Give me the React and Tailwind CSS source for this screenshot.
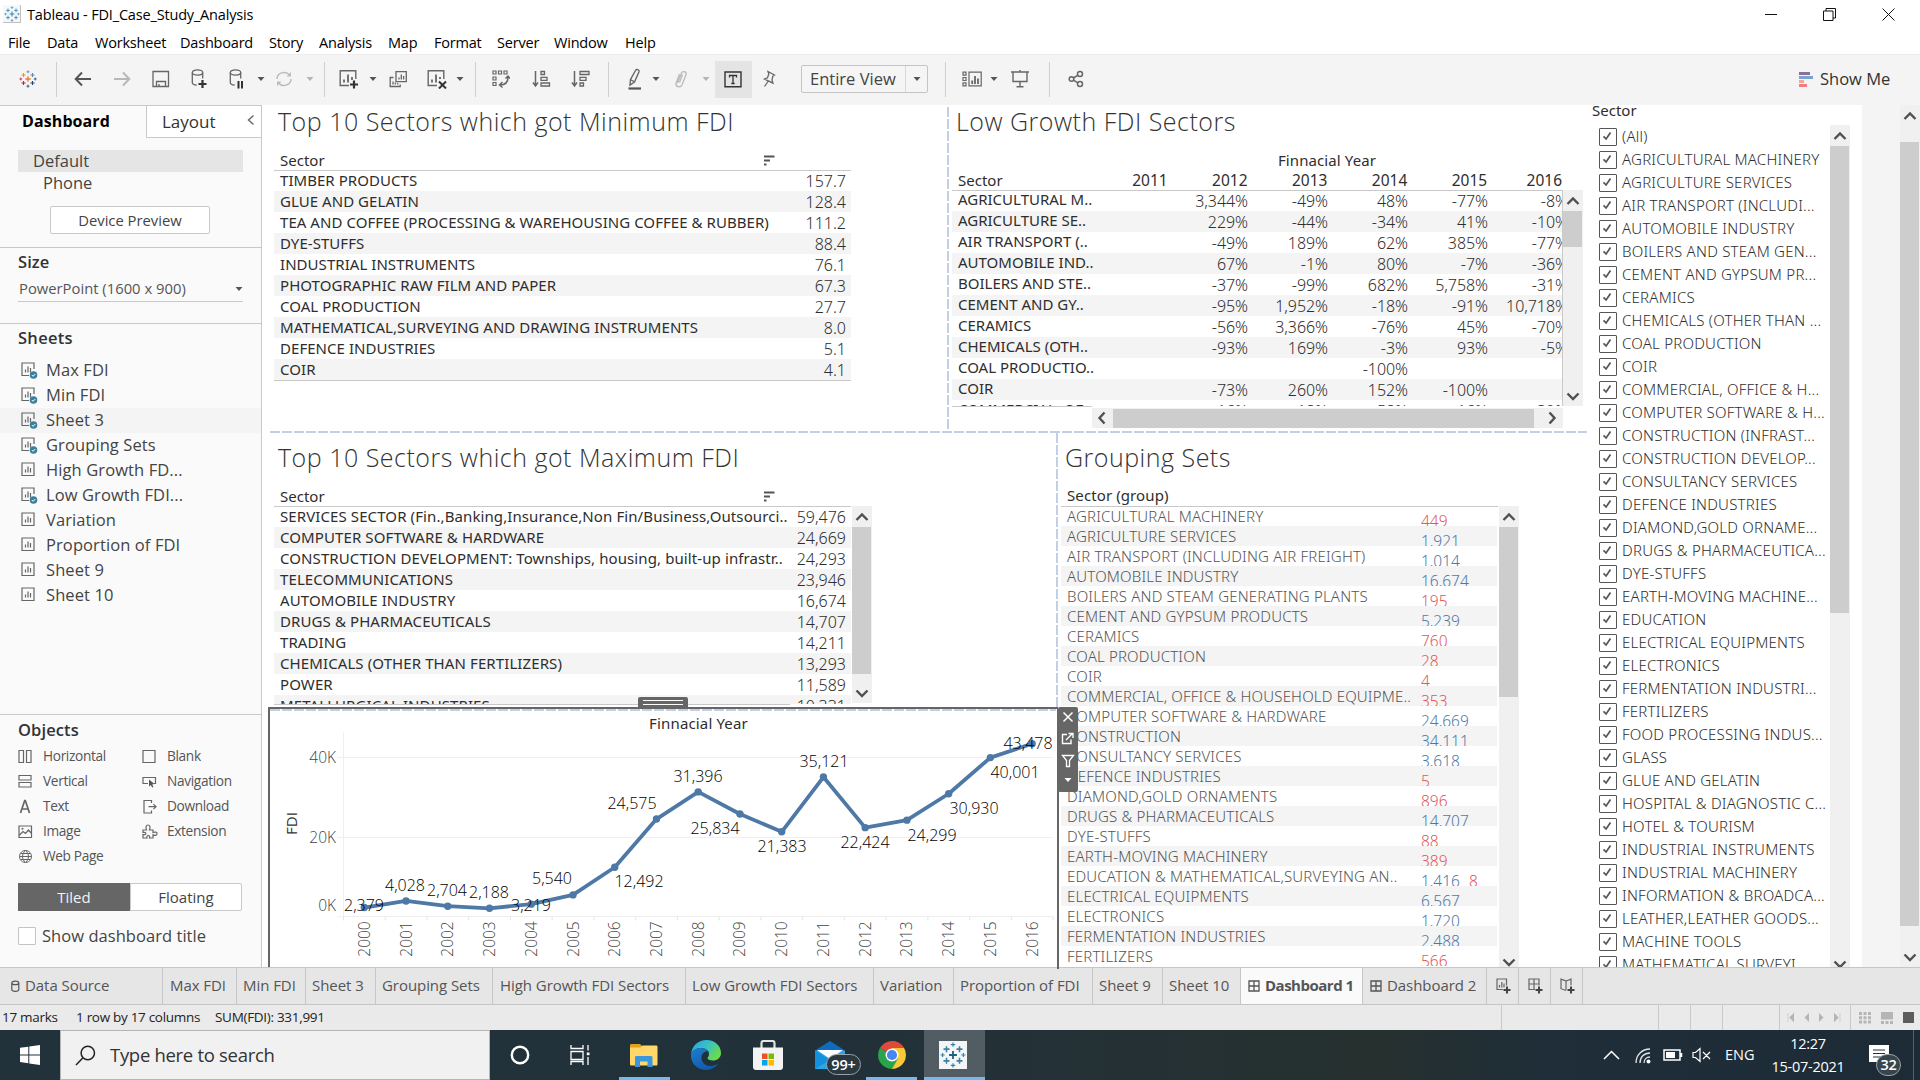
import React from "react";

const MIN_ROWS = [
  ["TIMBER PRODUCTS", "157.7"],
  ["GLUE AND GELATIN", "128.4"],
  ["TEA AND COFFEE (PROCESSING & WAREHOUSING COFFEE & RUBBER)", "111.2"],
  ["DYE-STUFFS", "88.4"],
  ["INDUSTRIAL INSTRUMENTS", "76.1"],
  ["PHOTOGRAPHIC RAW FILM AND PAPER", "67.3"],
  ["COAL PRODUCTION", "27.7"],
  ["MATHEMATICAL,SURVEYING AND DRAWING INSTRUMENTS", "8.0"],
  ["DEFENCE INDUSTRIES", "5.1"],
  ["COIR", "4.1"],
];
const MAX_ROWS = [
  ["SERVICES SECTOR (Fin.,Banking,Insurance,Non Fin/Business,Outsourci..", "59,476"],
  ["COMPUTER SOFTWARE & HARDWARE", "24,669"],
  ["CONSTRUCTION DEVELOPMENT: Townships, housing, built-up infrastr..", "24,293"],
  ["TELECOMMUNICATIONS", "23,946"],
  ["AUTOMOBILE INDUSTRY", "16,674"],
  ["DRUGS & PHARMACEUTICALS", "14,707"],
  ["TRADING", "14,211"],
  ["CHEMICALS (OTHER THAN FERTILIZERS)", "13,293"],
  ["POWER", "11,589"],
  ["METALLURGICAL INDUSTRIES", "10,331"],
];
const LOW_ROWS = [
  ["AGRICULTURAL M..", "", "3,344%", "-49%", "48%", "-77%", "-8%"],
  ["AGRICULTURE SE..", "", "229%", "-44%", "-34%", "41%", "-10%"],
  ["AIR TRANSPORT (..", "", "-49%", "189%", "62%", "385%", "-77%"],
  ["AUTOMOBILE IND..", "", "67%", "-1%", "80%", "-7%", "-36%"],
  ["BOILERS AND STE..", "", "-37%", "-99%", "682%", "5,758%", "-31%"],
  ["CEMENT AND GY..", "", "-95%", "1,952%", "-18%", "-91%", "10,718%"],
  ["CERAMICS", "", "-56%", "3,366%", "-76%", "45%", "-70%"],
  ["CHEMICALS (OTH..", "", "-93%", "169%", "-3%", "93%", "-5%"],
  ["COAL PRODUCTIO..", "", "", "", "-100%", "", ""],
  ["COIR", "", "-73%", "260%", "152%", "-100%", ""],
  ["COMMERCIAL, OF..", "", "-16%", "-18%", "-58%", "-16%", "-39%"],
];
const GROUP_ROWS = [
  ["AGRICULTURAL MACHINERY", "449", 0],
  ["AGRICULTURE SERVICES", "1,921", 1],
  ["AIR TRANSPORT (INCLUDING AIR FREIGHT)", "1,014", 1],
  ["AUTOMOBILE INDUSTRY", "16,674", 1],
  ["BOILERS AND STEAM GENERATING PLANTS", "195", 0],
  ["CEMENT AND GYPSUM PRODUCTS", "5,239", 1],
  ["CERAMICS", "760", 0],
  ["COAL PRODUCTION", "28", 0],
  ["COIR", "4", 0],
  ["COMMERCIAL, OFFICE & HOUSEHOLD EQUIPME..", "353", 0],
  ["COMPUTER SOFTWARE & HARDWARE", "24,669", 1],
  ["CONSTRUCTION", "34,111", 1],
  ["CONSULTANCY SERVICES", "3,618", 1],
  ["DEFENCE INDUSTRIES", "5", 0],
  ["DIAMOND,GOLD ORNAMENTS", "896", 0],
  ["DRUGS & PHARMACEUTICALS", "14,707", 1],
  ["DYE-STUFFS", "88", 0],
  ["EARTH-MOVING MACHINERY", "389", 0],
  ["EDUCATION & MATHEMATICAL,SURVEYING AN..", "1,416", 1, "8"],
  ["ELECTRICAL EQUIPMENTS", "6,567", 1],
  ["ELECTRONICS", "1,720", 1],
  ["FERMENTATION INDUSTRIES", "2,488", 1],
  ["FERTILIZERS", "566", 0],
];
const FILTERS = [
  "(All)", "AGRICULTURAL MACHINERY", "AGRICULTURE SERVICES", "AIR TRANSPORT (INCLUDI...", "AUTOMOBILE INDUSTRY",
  "BOILERS AND STEAM GEN...", "CEMENT AND GYPSUM PR...", "CERAMICS", "CHEMICALS (OTHER THAN ...", "COAL PRODUCTION",
  "COIR", "COMMERCIAL, OFFICE & H...", "COMPUTER SOFTWARE & H...", "CONSTRUCTION (INFRAST...", "CONSTRUCTION DEVELOP...",
  "CONSULTANCY SERVICES", "DEFENCE INDUSTRIES", "DIAMOND,GOLD ORNAME...", "DRUGS & PHARMACEUTICA...", "DYE-STUFFS",
  "EARTH-MOVING MACHINE...", "EDUCATION", "ELECTRICAL EQUIPMENTS", "ELECTRONICS", "FERMENTATION INDUSTRI...",
  "FERTILIZERS", "FOOD PROCESSING INDUS...", "GLASS", "GLUE AND GELATIN", "HOSPITAL & DIAGNOSTIC C...", "HOTEL & TOURISM",
  "INDUSTRIAL INSTRUMENTS", "INDUSTRIAL MACHINERY", "INFORMATION & BROADCA...", "LEATHER,LEATHER GOODS...", "MACHINE TOOLS",
  "MATHEMATICAL,SURVEYI...",
];
/* value, label centre x, label centre y (plot coordinates start at 270,710) */
const POINTS = [
  [2379, 94, 196], [4028, 135, 176], [2704, 177, 181], [2188, 219, 183], [3219, 261, 196], [5540, 282, 169],
  [12492, 369, 172], [24575, 362, 94], [31396, 428, 67], [25834, 445, 119], [21383, 512, 137], [35121, 554, 52],
  [22424, 595, 133], [24299, 662, 126], [30930, 704, 99], [40001, 745, 63], [43478, 758, 34],
];

/* ---------- small pieces ---------- */
const Svg = ({ w = 22, h = 22, children, className = "" }) => (
  <svg width={w} height={h} viewBox={`0 0 ${w} ${h}`} fill="none" className={`shrink-0 ${className}`}>{children}</svg>
);
const Caret = ({ c = "#555" }) => <Svg w={8} h={6}><path d="M0.5 1h7L4 5z" fill={c} /></Svg>;

function Chevron({ dir }) {
  const d = { up: "M1.5 10 7 4.5 12.5 10", down: "M1.5 4.5 7 10 12.5 4.5", left: "M9.5 1.5 4.5 7l5 5.5", right: "M4.5 1.5l5 5.5-5 5.5" }[dir];
  return <Svg w={14} h={14}><path d={d} stroke="#505050" strokeWidth="2.4" /></Svg>;
}

function Plus({ x, y, r, c, w }) {
  return <path d={`M${x - r} ${y}h${2 * r}M${x} ${y - r}v${2 * r}`} stroke={c} strokeWidth={w} />;
}
function Logo({ size = 20, colors }) {
  const [a, b, c, d, e] = colors;
  return (
    <svg width={size} height={size} viewBox="0 0 40 40" fill="none" className="shrink-0">
      <Plus x={20} y={20} r={6} c={a} w={2.8} />
      <Plus x={10} y={11} r={4.6} c={b} w={2.4} /><Plus x={30} y={11} r={4.6} c={c} w={2.4} />
      <Plus x={10} y={29} r={4.6} c={d} w={2.4} /><Plus x={30} y={29} r={4.6} c={e} w={2.4} />
      <Plus x={20} y={4} r={3.4} c={c} w={1.8} /><Plus x={20} y={36} r={3.4} c={e} w={1.8} />
      <Plus x={4} y={20} r={3.2} c={d} w={1.8} /><Plus x={36} y={20} r={3.2} c={e} w={1.8} />
    </svg>
  );
}
const BLUE_LOGO = ["#3d83ad", "#4a90b8", "#4a90b8", "#4a90b8", "#4a90b8"];
const COLOR_LOGO = ["#eb7a2c", "#eb9129", "#5c8aa8", "#c72037", "#1f447e"];

const DashH = ({ className = "" }) => (
  <div className={`h-[2px] bg-[repeating-linear-gradient(to_right,#c3cfe4_0px,#c3cfe4_10px,transparent_10px,transparent_12px)] ${className}`} />
);
const DashV = ({ className = "" }) => (
  <div className={`w-[2px] shrink-0 bg-[repeating-linear-gradient(to_bottom,#c3cfe4_0px,#c3cfe4_10px,transparent_10px,transparent_12px)] ${className}`} />
);

function VScroll({ className = "", thumb, bottom = "h-[20px]" }) {
  return (
    <div className={`flex w-[20px] shrink-0 flex-col bg-[#f0f0f0] ${className}`}>
      <div className="flex h-[21px] shrink-0 items-center justify-center"><Chevron dir="up" /></div>
      <div className={`w-[19px] bg-[#cdcdcd] ${thumb}`} />
      <div className={`mt-auto flex shrink-0 items-center justify-center overflow-hidden ${bottom}`}><Chevron dir="down" /></div>
    </div>
  );
}

const SortIcon = () => (
  <Svg w={11} h={11}><path d="M0 1.500h10.500M0 5.500h6M0 9.500h2.500" stroke="#555" strokeWidth="2" /></Svg>
);

/* ---------- toolbar ---------- */
const S = { stroke: "#666", strokeWidth: 1.5 };
const Sep = ({ className }) => (
  <div className={`flex h-[35px] shrink-0 justify-center ${className}`}><div className="w-px bg-[#cfcfcf]" /></div>
);
const Cell = ({ className = "", children }) => (
  <div className={`flex shrink-0 items-center justify-center ${className}`}>{children}</div>
);

function Toolbar() {
  return (
    <div className="flex h-[51px] shrink-0 items-center border-t border-[#ececec] bg-[#f4f4f4] pb-[2px] pl-[3px]">
      <Cell className="w-[49px]"><Logo size={18} colors={COLOR_LOGO} /></Cell>
      <Sep className="w-[9px]" />
      <Cell className="w-[44px]"><Svg w={18} h={16}><path d="M17 8H2M8 1.500 1.700 8 8 14.500" stroke="#555" strokeWidth="2" /></Svg></Cell>
      <Cell className="w-[34px]"><Svg w={18} h={16}><path d="M1 8h15M10 1.500 16.300 8 10 14.500" stroke="#b8b8b8" strokeWidth="2" /></Svg></Cell>
      <Cell className="w-[44px]"><Svg w={18} h={18}><path d="M1 1.500h15.500v15H1zM4.500 16.500v-5h9v5M7 16v-2" {...S} strokeWidth="1.300" /></Svg></Cell>
      <Cell className="w-[34px]">
        <Svg w={18} h={20}><ellipse cx="6.500" cy="3.500" rx="5.200" ry="2.600" {...S} strokeWidth="1.300" /><path d="M1.300 3.500v10c0 1.500 2 2.500 4.500 2.700M11.700 3.500v6" {...S} strokeWidth="1.300" /><path d="M11.500 11v8M7.500 15h8" stroke="#333" strokeWidth="2.200" /></Svg>
      </Cell>
      <Cell className="w-[40px]">
        <Svg w={16} h={20}><ellipse cx="6.500" cy="3.500" rx="5.200" ry="2.600" {...S} strokeWidth="1.300" /><path d="M1.300 3.500v10c0 1.500 2 2.500 4.500 2.700M11.700 3.500v6" {...S} strokeWidth="1.300" /><path d="M9.500 12v7.500M13 12v7.500" stroke="#333" strokeWidth="2" /></Svg>
      </Cell>
      <Cell className="w-[8px]"><Caret /></Cell>
      <Cell className="w-[38px]">
        <Svg w={18} h={16}><path d="M2 8a7 6.500 0 0 1 12.500-4M16 8a7 6.500 0 0 1-12.500 4" stroke="#bbb" strokeWidth="1.500" /><path d="M16 1v4.500h-4.500zM2 15v-4.500h4.500z" fill="#bbb" /></Svg>
      </Cell>
      <Cell className="w-[13px]"><Caret c="#b5b5b5" /></Cell>
      <Sep className="w-[17px]" />
      <Cell className="w-[32px]">
        <Svg w={20} h={20}><path d="M10 16.500H1.200V1.700h15.600V10" {...S} strokeWidth="1.400" /><path d="M5 13.500v-3M9 13.500v-8M13 11V8" {...S} strokeWidth="1.800" /><path d="M15 11.500v8M11 15.500h8" stroke="#333" strokeWidth="2.200" /></Svg>
      </Cell>
      <Cell className="w-[16px]"><Caret /></Cell>
      <Cell className="mr-[4px] w-[34px]">
        <Svg w={19} h={19}><path d="M7 1.700h10.300v10H7zM4.500 7.500H1.200v9h10V14.500" {...S} strokeWidth="1.300" /><path d="M10 9.500V7.500M12.300 9.500v-5M14.600 9.500v-3.500M4 14.500v-3M6.300 14.500v-2M8.600 14.500v-1.500" {...S} strokeWidth="1.300" /></Svg>
      </Cell>
      <Cell className="w-[36px]">
        <Svg w={20} h={20}><path d="M10 16.500H1.200V1.700h15.600V10" {...S} strokeWidth="1.400" /><path d="M5 13.500v-3M9 13.500v-8M13 10V8" {...S} strokeWidth="1.800" /><path d="m12 12.500 7 7M19 12.500l-7 7" stroke="#333" strokeWidth="2" /></Svg>
      </Cell>
      <Cell className="w-[10px]"><Caret /></Cell>
      <Sep className="w-[21px]" />
      <Cell className="w-[30px]">
        <Svg w={18} h={20}><path d="M1 2h3v3H1zM6.500 2h3v3h-3zM12 2h3v3h-3zM1 8h3v3H1zM1 13.500h3v3H1z" {...S} strokeWidth="1.200" /><path d="M16 8c0 5-3 8-8 8M13.500 9.500 16 7l2 2.500M10.500 13 7.500 16l3 2.500" {...S} strokeWidth="1.500" /></Svg>
      </Cell>
      <Cell className="w-[50px]">
        <Svg w={19} h={18}><path d="M3.500 1v14M1 12.500l2.500 3.500 2.500-3.500" {...S} /><path d="M9 1.500h3.500v3H9zM9 7.300h6v3H9zM9 13h8.500v3H9z" {...S} strokeWidth="1.300" /></Svg>
      </Cell>
      <Cell className="w-[28px]">
        <Svg w={19} h={18}><path d="M3.500 1v14M1 12.500l2.500 3.500 2.500-3.500" {...S} /><path d="M9 1.500h9v3H9zM9 7.300h6v3H9zM9 13h3.500v3H9z" {...S} strokeWidth="1.300" /></Svg>
      </Cell>
      <Sep className="w-[29px]" />
      <Cell className="w-[24px]">
        <Svg w={16} h={22}><path d="M8.500 2.500c.8-1.800 4-1 3.600 1L7.500 14 3 17l.5-5.500zM3.500 11.500 7.500 14" {...S} strokeWidth="1.400" /><path d="M1.500 20.500h12.500" stroke="#555" strokeWidth="2.200" /></Svg>
      </Cell>
      <Cell className="w-[18px]"><Caret /></Cell>
      <Cell className="w-[32px]">
        <Svg w={14} h={20}><path d="M3.500 14 7.500 4c1-2.500 5.200-1.500 4.500 1.500L8 16c-1.500 3-6.500 2-6-1.500L5.500 5M5.500 13.500l3-8" stroke="#bbb" strokeWidth="1.300" /></Svg>
      </Cell>
      <Cell className="w-[17px]"><Caret c="#b5b5b5" /></Cell>
      <Cell className="ml-[1px] h-[37px] w-[37px] bg-[#e4e4e4] pr-[2px]">
        <Svg w={18} h={17}><path d="M1 1h16v14.800H1z" stroke="#333" strokeWidth="1.400" /><path d="M5.500 6.500V4.500h7v2M9 4.500v8M7.300 12.500h3.400" stroke="#333" strokeWidth="1.300" /></Svg>
      </Cell>
      <Cell className="w-[34px]">
        <Svg w={14} h={18}><path d="M6 1.500 12.500 5 10.800 6.200 10 10.200l1 3L2.500 9l3-1.200L6.800 4zM6 11.500 2.500 16.500" {...S} strokeWidth="1.300" /></Svg>
      </Cell>
      <div className="ml-[15px] flex h-[28px] w-[127px] shrink-0 items-center rounded-[2px] border border-[#c4c4c4] bg-[#f5f5f5]">
        <div className="flex-1 whitespace-nowrap pt-px pl-[8px] text-[16.5px] text-[#444]">Entire View</div>
        <div className="flex h-full w-[22px] items-center justify-center border-l border-[#d8d8d8]"><Caret /></div>
      </div>
      <Sep className="w-[35px]" />
      <Cell className="w-[18px]">
        <Svg w={20} h={16}><path d="M1 1.200h3v3H1zM1 6.500h3v3H1zM1 11.800h3v3H1zM7 1.200h12.200v13.600H7z" {...S} strokeWidth="1.200" /><path d="M10.200 13V9.500M13 13V5M16 13V7.500" {...S} strokeWidth="1.800" /></Svg>
      </Cell>
      <Cell className="w-[25px]"><Caret /></Cell>
      <Cell className="w-[28px]"><Svg w={18} h={18}><path d="M0 2h18M2 2v9.500h14V2M9 0v2M9 11.500v5M5.500 16.700h7" {...S} strokeWidth="1.400" /></Svg></Cell>
      <Sep className="w-[31px]" />
      <Cell className="w-[22px]"><Svg w={16} h={18}><circle cx="3.500" cy="9" r="2.300" {...S} /><circle cx="12" cy="4" r="2.500" {...S} /><circle cx="12" cy="14" r="2.500" {...S} /><path d="m5.500 8 4.500-2.800M5.500 10.200l4.300 2.600" {...S} /></Svg></Cell>
      <div className="mr-[30px] ml-auto flex items-center gap-[7px]">
        <div className="flex flex-col gap-px">
          <div className="h-[3px] w-[11px] bg-[#86719a]" /><div className="h-[3px] w-[14px] bg-[#7ba3cf]" />
          <div className="h-[3px] w-[5px] bg-[#f2a98c]" /><div className="h-[3px] w-[8px] bg-[#f67a84]" />
        </div>
        <div className="w-[70px] whitespace-nowrap text-[16.5px] text-[#333]">Show Me</div>
      </div>
    </div>
  );
}

/* ---------- side pane ---------- */
function SheetIcon({ checked }) {
  return (
    <Svg w={18} h={18}>
      <path d={checked ? "M8 13.500H1V1h12v6" : "M1 1h12v12.500H1z"} stroke="#666" strokeWidth="1.200" />
      <path d="M4.500 10.500v-3M7 10.500V4.500M9.500 10.500V6" stroke="#666" strokeWidth="1.200" />
      {checked && <><circle cx="12.500" cy="13" r="3.800" fill="#3b7f9f" /><path d="m10.800 13 1.300 1.300 2.200-2.300" stroke="#fff" strokeWidth="1" /></>}
    </Svg>
  );
}
const SHEETS = [["Max FDI", 1], ["Min FDI", 1], ["Sheet 3", 1], ["Grouping Sets", 1], ["High Growth FD...", 0], ["Low Growth FDI...", 1], ["Variation", 0], ["Proportion of FDI", 0], ["Sheet 9", 0], ["Sheet 10", 0]];

const O = { stroke: "#666", strokeWidth: 1.2 };
const OBJ = {
  Horizontal: <path d="M1 1.500h4.500v12H1zM8.500 1.500H13v12H8.500z" {...O} />,
  Vertical: <path d="M1 1.500h12V6H1zM1 8.500h12V13H1z" {...O} />,
  Text: <path d="M2.500 14 6.700 1.500h.6L11.500 14M4 10h6" {...O} strokeWidth="1.700" />,
  Image: <><path d="M1 2h12.500v11.500H1zM1.500 11l3.500-3.500 2.500 2L10.500 6l3 3.500" {...O} /><circle cx="4.500" cy="4.800" r="1" fill="#666" /></>,
  "Web Page": <path d="M7.500 1.500a6 6 0 1 0 .01 0zM1.500 7.500h12M2.500 4.500h10M2.500 10.500h10M7.500 1.500c-4 3.500-4 8.500 0 12M7.500 1.500c4 3.500 4 8.500 0 12" {...O} strokeWidth="1" />,
  Blank: <path d="M1 1.500h12v12H1z" {...O} />,
  Navigation: <><path d="M6 9.500H1v-6h12.500v6H12" {...O} /><path d="m7 5.500 5.500 4.500-2.300.4 1.200 2.600-1.300.6-1.200-2.600L7 12.500z" fill="#555" /></>,
  Download: <path d="M9.500 4V1.500H2v12.500h7.500V11.500M6.500 7.700h7.500M11.500 5.200 14 7.700l-2.500 2.500" {...O} />,
  Extension: <path d="M1 6h3.500C3.500 3 4 1 6 1s2.500 2 1.500 5H11v2.500c2.500-1 4-.3 4 1.200s-1.500 2.200-4 1.200v3.100H7.500c.5-1.500 0-2.500-1.200-2.500S4.500 12.500 5 14H1v-3.500c2 .5 2.800 0 2.800-1S3 8 1 8.500z" {...O} />,
};
const ObjItem = ({ name }) => (
  <div className="flex h-[25px] items-center">
    <Svg w={16} h={15}>{OBJ[name]}</Svg>
    <span className="ml-[9px] text-[13.7px] tracking-[-0.35px] text-[#555]">{name}</span>
  </div>
);

function SidePane() {
  return (
    <div className="flex w-[262px] shrink-0 flex-col border-t border-r border-[#c9c9c9] bg-[#fafafa] text-[#444]">
      <div className="flex h-[32px] shrink-0">
        <div className="w-[146px] pl-[22px] text-[16px] leading-[31px] font-bold tracking-[0.1px] text-black">Dashboard</div>
        <div className="flex flex-1 items-center border-b border-l border-[#c9c9c9] bg-white pl-[15px] text-[17px] text-[#333]">
          Layout
          <Svg w={8} h={12} className="mb-1 mr-[6px] ml-auto"><path d="M6.500 1.500 1.500 6l5 4.500" stroke="#666" strokeWidth="1.400" /></Svg>
        </div>
      </div>
      <div className="mt-[12px] ml-[18px] h-[22px] w-[225px] bg-[#e5e5e5] pl-[15px] text-[16.5px] leading-[22px]">Default</div>
      <div className="pl-[43px] text-[16.5px] leading-[22px]">Phone</div>
      <div className="mt-[12px] ml-[50px] flex h-[28px] w-[160px] items-center justify-center rounded-[2px] border border-[#c9c9c9] bg-white pt-px text-[14.8px]">Device Preview</div>
      <div className="mt-[13px] border-t border-[#c9c9c9]" />
      <div className="mt-[3px] pl-[18px] text-[16.5px] leading-[22px] font-semibold tracking-[0.1px] text-[#333]">Size</div>
      <div className="mt-[3px] ml-[18px] flex h-[26px] w-[225px] items-center justify-between border-b border-[#c9c9c9] pl-[1px] text-[14.8px] text-[#555]">
        <span className="whitespace-nowrap">PowerPoint (1600 x 900)</span><Caret />
      </div>
      <div className="mt-[21px] border-t border-[#c9c9c9]" />
      <div className="mt-[3px] mb-[9px] pl-[18px] text-[16.5px] leading-[22px] font-semibold tracking-[0.3px] text-[#333]">Sheets</div>
      {SHEETS.map(([n, c], i) => (
        <div key={n} className={`flex h-[25px] shrink-0 items-center pl-[21px] text-[16.5px] tracking-[0.1px] ${i === 2 ? "bg-[#f4f4f4]" : ""}`}>
          <SheetIcon checked={!!c} /><span className="ml-[7px] whitespace-nowrap">{n}</span>
        </div>
      ))}
      <div className="mt-[106px] border-t border-[#c9c9c9]" />
      <div className="mt-[4px] mb-[3px] pl-[18px] text-[16.5px] leading-[22px] font-semibold tracking-[0.1px] text-[#333]">Objects</div>
      <div className="flex pl-[18px]">
        <div className="w-[124px]">{["Horizontal", "Vertical", "Text", "Image", "Web Page"].map((n) => <ObjItem key={n} name={n} />)}</div>
        <div>{["Blank", "Navigation", "Download", "Extension"].map((n) => <ObjItem key={n} name={n} />)}</div>
      </div>
      <div className="mt-[14px] ml-[18px] flex h-[28px] w-[224px] text-[15px]">
        <div className="flex w-[112px] items-center justify-center bg-[#666] text-[#f2f2f2]">Tiled</div>
        <div className="flex w-[112px] items-center justify-center rounded-r-[2px] border border-[#c9c9c9] bg-white">Floating</div>
      </div>
      <div className="mt-[16px] ml-[18px] flex items-center">
        <div className="h-[18px] w-[18px] rounded-[1px] border border-[#c4c4c4] bg-white" />
        <span className="ml-[6px] text-[16.5px] leading-[18px] whitespace-nowrap tracking-[0.05px]">Show dashboard title</span>
      </div>
    </div>
  );
}

/* ---------- worksheets ---------- */
const Title = ({ children }) => (
  <div className="h-[34px] whitespace-nowrap text-[25px] leading-[33px] font-light tracking-[0.5px] text-[#333]">{children}</div>
);

function RankTable({ rows, clipped }) {
  return (
    <div className="w-[577px] font-['Noto_Sans'] text-[15px] text-[#2e2e2e]">
      <div className="-mb-px flex h-[21px] items-center border-b border-[#c9c9c9] pr-[76px] pl-[6px]">
        <span className="flex-1 leading-[18px]">Sector</span><SortIcon />
      </div>
      <div className={clipped ? "h-[198px] overflow-hidden" : "border-b border-[#c9c9c9]"}>
        {rows.map(([n, v], i) => (
          <div key={n} className={`flex h-[21px] justify-between pr-[5px] pl-[6px] leading-[20px] ${i % 2 ? "bg-[#f4f4f4]" : ""}`}>
            <span className={`whitespace-nowrap ${clipped ? "tracking-[0.1px]" : "tracking-[0.05px]"}`}>{n}</span>
            <span className="pt-px text-[16px] font-light">{v}</span>
          </div>
        ))}
      </div>
      {clipped && <div className="w-[516px] border-t border-[#c9c9c9]" />}
    </div>
  );
}

function MinSheet() {
  return (
    <div className="w-[685px] shrink-0">
      <div className="pl-[16px]"><Title>Top 10 Sectors which got Minimum FDI</Title></div>
      <div className="mt-[11px] pl-[12px]"><RankTable rows={MIN_ROWS} /></div>
    </div>
  );
}

function MaxSheet() {
  return (
    <div className="h-[274px]">
      <div className="pt-[8px] pl-[16px]"><Title>Top 10 Sectors which got Maximum FDI</Title></div>
      <div className="mt-[11px] flex pl-[12px]">
        <RankTable rows={MAX_ROWS} clipped />
        <VScroll className="mt-[20px] ml-px h-[197px]" thumb="h-[147px]" />
      </div>
    </div>
  );
}

function LowSheet() {
  return (
    <div className="flex-1 pl-[3px] font-['Noto_Sans'] text-[15px] text-[#2e2e2e]">
      <div className="pl-[4px] font-['Open_Sans']"><Title>Low Growth FDI Sectors</Title></div>
      <div className="mt-[11px] flex h-[20px] w-[610px]">
        <div className="w-[140px]" /><div className="flex-1 text-center leading-[20px] tracking-[0.1px]">Finnacial Year</div>
      </div>
      <div className="-mb-px flex h-[21px] w-[610px] border-b border-[#c9c9c9] leading-[20px]">
        <div className="w-[136px] pl-[6px]">Sector</div>
        {["2011", "2012", "2013", "2014", "2015"].map((y) => <div key={y} className="w-[80px] text-right text-[15.5px]">{y}</div>)}
        <div className="w-[75px] text-right text-[15.5px]">2016</div>
      </div>
      <div className="flex">
        <div className="h-[216px] w-[611px] overflow-hidden border-r border-[#c9c9c9]">
          {LOW_ROWS.map((r, i) => (
            <div key={r[0]} className={`flex h-[21px] w-[620px] ${i % 2 ? "bg-[#f4f4f4]" : ""}`}>
              <div className="w-[136px] pl-[6px] leading-[19px] whitespace-nowrap">{r[0]}</div>
              {r.slice(1).map((v, k) => <div key={k} className="w-[80px] pt-px text-right text-[16px] leading-[20px] font-light tracking-[-0.05px]">{v}</div>)}
            </div>
          ))}
        </div>
        <VScroll className="h-[216px]" thumb="h-[36px]" />
      </div>
      <div className="flex h-[21px]">
        <div className="w-[140px] border-t border-[#c9c9c9]" />
        <div className="mt-[2px] flex h-[20px] w-[471px] items-center justify-between bg-[#f0f0f0]">
          <div className="flex w-[21px] justify-center pr-[2px]"><Chevron dir="left" /></div>
          <div className="h-[19px] w-[421px] bg-[#cdcdcd]" />
          <div className="flex flex-1 justify-center pl-[7px]"><Chevron dir="right" /></div>
        </div>
      </div>
    </div>
  );
}

function GroupSheet() {
  return (
    <div className="h-[534px] flex-1 overflow-hidden pt-[8px] font-['Noto_Sans']">
      <div className="pl-[7px] font-['Open_Sans']"><Title>Grouping Sets</Title></div>
      <div className="mt-[11px] flex pl-[3px]">
        <div className="w-[437px]">
          <div className="-mb-px h-[21px] border-b border-[#c9c9c9] pl-[6px] text-[15px] leading-[19px] tracking-[0.1px] text-[#2e2e2e]">Sector (group)</div>
          {GROUP_ROWS.map(([n, v, blue, extra], i) => (
            <div key={n} className={`flex h-[20px] w-[436px] overflow-hidden pl-[6px] text-[15px] leading-[20px] font-light text-[#555] ${i % 2 ? "bg-[#f4f4f4]" : ""}`}>
              <span className="w-[354px] whitespace-nowrap tracking-[0.18px]">{n}</span>
              <span className={`pt-[5px] text-[15.5px] ${blue ? "text-[#4e79a7]" : "text-[#e15759]"}`}>{v}</span>
              {extra && <span className="ml-[9px] pt-[5px] text-[15.5px] text-[#e15759]">{extra}</span>}
            </div>
          ))}
        </div>
        <VScroll className="mt-[20px] ml-px h-[466px]" thumb="h-[170px]" />
      </div>
    </div>
  );
}

function Chart() {
  const X = (i) => 94.3 + 41.74 * i;
  const Y = (v) => 207.5 - (v / 1000) * 3.985;
  return (
    <div className="relative ml-[6px] h-[260px] w-[790px] border-t-2 border-l-2 border-[#666] bg-white">
      <DashH className="w-[786px]" />
      <svg width="788" height="257" viewBox="0 0.5 788 257" className="absolute top-[1px] left-0 block font-['Open_Sans'] font-light">
        <path d="M67.500 128H783M67.500 48H783M67.500 207H783M73.500 23v184" stroke="#efefef" strokeWidth="1" />
        {Array.from({ length: 18 }, (_, i) => <path key={i} d={`M${73.5 + 41.74 * i} 207v4`} stroke="#e6e6e6" />)}
        <text x="428.500" y="19.500" textAnchor="middle" fontSize="15" letterSpacing="0.150" className="font-['Noto_Sans'] font-normal" fill="#2e2e2e">Finnacial Year</text>
        <text x="66" y="53" textAnchor="end" fontSize="15.500" fill="#444">40K</text>
        <text x="66" y="133" textAnchor="end" fontSize="15.500" fill="#444">20K</text>
        <text x="66" y="201.500" textAnchor="end" fontSize="15.500" fill="#444">0K</text>
        <text transform="translate(27 114) rotate(-90)" textAnchor="middle" fontSize="15" className="font-normal" fill="#333">FDI</text>
        <polyline points={POINTS.map(([v], i) => `${X(i)},${Y(v)}`).join(" ")} stroke="#4e79a7" strokeWidth="3.800" fill="none" strokeLinejoin="round" />
        {POINTS.map(([v], i) => (
          <g key={i}>
            <circle cx={X(i)} cy={Y(v)} r="3.700" fill="#4e79a7" />
            <text transform={`translate(${X(i) + 5.5} 229.500) rotate(-90)`} textAnchor="middle" fontSize="15.500" fill="#444">{2000 + i}</text>
          </g>
        ))}
        {POINTS.map(([v, lx, ly], i) => (
          <text key={i} x={lx} y={ly + 5} textAnchor="middle" fontSize="16" fill="#000">{v.toLocaleString("en-US")}</text>
        ))}
      </svg>
      <div className="absolute -top-[12px] left-[368px] flex h-[12px] w-[50px] flex-col gap-[3px] rounded-t-[2px] bg-[#666] px-[5px] pt-[3px]">
        <div className="h-px bg-white" /><div className="h-px bg-white" />
      </div>
      <div className="absolute top-0 -right-px h-[260px] w-[2px] bg-[#666]" />
      <div className="absolute -top-[2px] left-[788px] flex h-[85px] w-[20px] flex-col items-center justify-between rounded-[2px] bg-[#666] pt-[4px] pr-px pb-[9px]">
        <Svg w={12} h={12}><path d="m1.500 1.500 9 9M10.500 1.500l-9 9" stroke="#fff" strokeWidth="1.500" /></Svg>
        <Svg w={13} h={13}><path d="M6 2.500H1.500v9H10V7.500M5 8l6-6M7.500 1.500H12V6" stroke="#fff" strokeWidth="1.400" /></Svg>
        <Svg w={14} h={14}><path d="M1.500 1.500h11L8.500 6.500v6h-3v-6z" stroke="#fff" strokeWidth="1.300" /></Svg>
        <Svg w={8} h={6}><path d="M.5 1h7L4 5z" fill="#fff" /></Svg>
      </div>
    </div>
  );
}

function FilterPane() {
  return (
    <div className="h-[862px] w-[275px] overflow-hidden pl-[5px] font-['Noto_Sans'] text-[15px] text-[#2e2e2e]">
      <div className="h-[20px] leading-[10px]">Sector</div>
      <div className="flex h-[842px]">
        <div className="w-[238px] pl-[7px]">
          {FILTERS.map((f) => (
            <div key={f} className="flex h-[23px] items-center">
              <div className="flex h-[18px] w-[18px] shrink-0 items-center justify-center rounded-[1px] border border-[#555] bg-white">
                <Svg w={12} h={12}><path d="m1.500 5.300 2.600 2.700L8.500 1.500" stroke="#555" strokeWidth="1.700" /></Svg>
              </div>
              <span className="ml-[5px] whitespace-nowrap font-light tracking-[0.23px]">{f}</span>
            </div>
          ))}
        </div>
        <VScroll className="h-[847px]" thumb="h-[467px]" bottom="h-[16px]" />
      </div>
    </div>
  );
}

/* ---------- bottom strips ---------- */
const Cylinder = () => <Svg w={9} h={12}><path d="M.8 3v6.500c0 1.200 1.500 1.800 3.500 1.800s3.500-.6 3.500-1.800V3c0-1.200-1.500-1.800-3.500-1.800S.8 1.800.8 3c0 1 1.500 1.700 3.500 1.700S7.800 4 7.800 3" stroke="#555" strokeWidth="1.200" /></Svg>;
const GridIcon = () => <Svg w={12} h={12}><path d="M1 1h10v10H1zM6 1v10M1 6h10" stroke="#555" strokeWidth="1.300" /></Svg>;
const NewPlus = () => <path d="M11 8.500v7M7.500 12h7" stroke="#444" strokeWidth="2" />;

function SheetTabs() {
  const tab = "flex shrink-0 items-center whitespace-nowrap border-r border-[#c6c6c6] pb-px";
  return (
    <div className="flex h-[38px] shrink-0 border-t border-b border-[#c6c6c6] bg-[#e6e6e6] text-[15px] tracking-[-0.06px] text-[#555]">
      <div className={`${tab} w-[163px] gap-[5px] pl-[11px]`}><Cylinder />Data Source</div>
      <div className={`${tab} w-[74px] pl-[7px]`}>Max FDI</div>
      <div className={`${tab} w-[69px] pl-[6px]`}>Min FDI</div>
      <div className={`${tab} w-[70px] pl-[6px]`}>Sheet 3</div>
      <div className={`${tab} w-[117px] pl-[6px]`}>Grouping Sets</div>
      <div className={`${tab} w-[193px] pl-[7px]`}>High Growth FDI Sectors</div>
      <div className={`${tab} w-[188px] pl-[6px]`}>Low Growth FDI Sectors</div>
      <div className={`${tab} w-[80px] pl-[6px]`}>Variation</div>
      <div className={`${tab} w-[139px] pl-[6px]`}>Proportion of FDI</div>
      <div className={`${tab} w-[70px] pl-[6px]`}>Sheet 9</div>
      <div className={`${tab} w-[78px] pl-[6px]`}>Sheet 10</div>
      <div className={`${tab} w-[122px] gap-[5px] bg-[#fafafa] pl-[7px] font-bold tracking-[-0.5px]`}><GridIcon />Dashboard 1</div>
      <div className={`${tab} w-[124px] gap-[5px] pl-[7px]`}><GridIcon />Dashboard 2</div>
      <div className={`${tab} w-[32px] pl-[9px]`}><Svg w={16} h={16}><path d="M7 11.500H1V1h9.500v6.500" {...O} /><path d="M3.500 9.500V7M5.800 9.500V4M8 9.500V5.500" {...O} /><NewPlus /></Svg></div>
      <div className={`${tab} w-[32px] pl-[9px]`}><Svg w={16} h={16}><path d="M7 11.500H1V1h10v6.500M6 1v10.500M1 6h10" {...O} /><NewPlus /></Svg></div>
      <div className={`${tab} w-[32px] pl-[9px]`}><Svg w={16} h={16}><path d="M6 12V3L1 1.200v9.500L6 12.500M6 3l5-1.800v6" {...O} /><NewPlus /></Svg></div>
    </div>
  );
}

function StatusBar() {
  const g = "#b5b5b5";
  return (
    <div className="flex h-[25px] shrink-0 items-center bg-[#eaeaea] pl-[2px] text-[13.5px] tracking-[-0.3px] text-[#222]">
      <span className="w-[74px] whitespace-nowrap">17 marks</span>
      <span className="w-[139px] whitespace-nowrap">1 row by 17 columns</span>
      <span>SUM(FDI): 331,991</span>
      <div className="ml-auto flex h-full">
        <div className="w-[157px] border-l border-[#c9c9c9]" />
        <div className="w-[32px] border-l border-[#c9c9c9]" />
        <div className="w-[32px] border-l border-[#c9c9c9]" />
        <div className="w-[57px] border-l border-[#c9c9c9]" />
        <div className="flex w-[71px] items-center justify-between border-l border-[#c9c9c9] pr-[9px] pl-[7px]">
          <Svg w={7} h={9}><path d="M1 0v9M7 0v9L2.500 4.500z" fill={g} stroke={g} strokeWidth="0.500" /></Svg>
          <Svg w={5} h={9}><path d="M5 0v9L.5 4.500z" fill={g} /></Svg>
          <Svg w={5} h={9}><path d="M0 0v9l4.500-4.500z" fill={g} /></Svg>
          <Svg w={7} h={9}><path d="M6 0v9M0 0v9l4.500-4.500z" fill={g} stroke={g} strokeWidth="0.500" /></Svg>
        </div>
        <div className="flex w-[70px] items-center border-l border-[#c9c9c9] pl-[8px]">
          <Svg w={12} h={12}><path d="M0 1.500h3M4.500 1.500h3M9 1.500h3M0 5.800h3M4.500 5.800h3M9 5.800h3M0 10.100h3M4.500 10.100h3M9 10.100h3" stroke={g} strokeWidth="3" /></Svg>
          <Svg w={12} h={12} className="ml-[10px]"><path d="M0 0h12v7.500H0zM0 9h3v3H0zM4.500 9h3v3h-3zM9 9h3v3H9z" fill={g} /></Svg>
          <div className="ml-[10px] h-[11px] w-[11px] bg-[#5c5c5c]" />
        </div>
      </div>
    </div>
  );
}

function Taskbar() {
  const slot = "flex h-full w-[62px] shrink-0 items-center justify-center";
  return (
    <div className="flex h-[50px] shrink-0 bg-[#212f37] bg-[linear-gradient(90deg,#21323b_0%,#223139_45%,#26302f_72%,#1f2e38_80%,#1c2b35_100%)] text-white">
      <div className="flex w-[60px] items-center justify-center"><Svg w={20} h={20}><path d="M0 2.800 8.300 1.700v7.700H0zM9.300 1.500 20 0v9.400H9.300zM0 10.500h8.300v7.700L0 17.100zM9.300 10.500H20V20L9.300 18.500z" fill="#fff" /></Svg></div>
      <div className="flex h-[50px] w-[430px] items-center border border-[#b5b5b5] bg-[#f1f1f1] pl-[14px] text-[18.5px] text-[#333]">
        <Svg w={21} h={21}><circle cx="12.800" cy="8" r="6.700" stroke="#222" strokeWidth="1.500" /><path d="M8 12.800 1 20" stroke="#222" strokeWidth="1.500" /></Svg>
        <span className="ml-[14px] tracking-[-0.3px]">Type here to search</span>
      </div>
      <div className="flex w-[60px] items-center justify-center"><Svg w={20} h={20}><circle cx="10" cy="10" r="8.200" stroke="#fff" strokeWidth="2.400" /></Svg></div>
      <div className="flex w-[60px] items-center justify-center">
        <Svg w={21} h={20}><path d="M1 0v3.500h12V0M1 6.500h12v8H1zM1 20v-3.500h12V20M18 0v5.500M18 12v8" stroke="#fff" strokeWidth="1.300" /><path d="M16.800 7.500h2.700v2.700h-2.700z" fill="#fff" /></Svg>
      </div>
      <div className={`${slot} relative ml-[3px]`}>
        <Svg w={28} h={24}><path d="M0 2.500C0 1.500.5 1 1.500 1H10l2.500 2.500V7H0z" fill="#e3a21a" /><path d="M0 4.500h10.500l2-2H26c1 0 1.500.5 1.500 1.500V21c0 1-.5 1.500-1.500 1.500H1.500C.5 22.500 0 22 0 21z" fill="#ffd869" /><path d="M5 24v-9.500c0-1 .6-1.600 1.600-1.600h14.300c1 0 1.600.6 1.600 1.600V24h-5v-5.500h-7.500V24z" fill="#3a96dd" /></Svg>
        <div className="absolute bottom-0 left-[6px] h-[3px] w-[51px] bg-[#76b9ed]" />
      </div>
      <div className={slot}>
        <svg width="30" height="30" viewBox="0 0 30 30" className="shrink-0">
          <defs>
            <linearGradient id="eg" x1="0" y1="0" x2="1" y2=".6"><stop offset="0" stopColor="#2aa3dd" /><stop offset=".5" stopColor="#35c1c8" /><stop offset="1" stopColor="#6bdc4b" /></linearGradient>
            <linearGradient id="eb" x1="0" y1="0" x2=".6" y2="1"><stop offset="0" stopColor="#1b7fd0" /><stop offset="1" stopColor="#1558a8" /></linearGradient>
          </defs>
          <path d="M0 14C1 5.500 7.500 0 15.500 0 24 0 30 6 30 13c0 5-4 7.500-8 7.500-3.500 0-5.500-1.300-5.500-2.300 0-.8 1.500-1.500 1.500-4.200 0-3.500-3.500-6-8-6C5.500 8 1.500 10.500 0 14z" fill="url(#eg)" />
          <path d="M0 14c1.500-4 5.500-6 10-6 3.500 0 6 1.300 7.500 3.500-3-.8-7 1.500-7 6.500 0 4.500 4 8 9 8 3 0 5.500-1 7.500-2.500C24.500 27.500 20 30 15 30 6.500 30-.8 23.500 0 14z" fill="url(#eb)" />
        </svg>
      </div>
      <div className={slot}>
        <Svg w={30} h={30}><path d="M8.500 9V3c0-1.200.7-2 2-2h9c1.300 0 2 .8 2 2v6" stroke="#dfe4e6" strokeWidth="2.200" /><path d="M0 7.500h30V27c0 1.800-1.200 3-3 3H3c-1.800 0-3-1.200-3-3z" fill="#f3f3f3" /><path d="M9 13.500h5.500V19H9z" fill="#f25022" /><path d="M15.500 13.500H21V19h-5.500z" fill="#7fba00" /><path d="M9 20h5.500v5.500H9z" fill="#00a4ef" /><path d="M15.500 20H21v5.500h-5.500z" fill="#ffb900" /></Svg>
      </div>
      <div className={`${slot} relative`}>
        <Svg w={30} h={28}><path d="M0 9.500 15 0l15 9.500z" fill="#0f6cbd" /><path d="M0 9.500h30V28H0z" fill="#28a8ea" /><path d="M2 9h26L15 18z" fill="#fff" /><path d="M0 9.500 15 19 0 28z" fill="#1490df" /></Svg>
        <div className="absolute top-[24px] left-[27px] flex h-[21px] w-[35px] items-center justify-center rounded-full border border-[#98a2a7] bg-[#2b383f] text-[14.5px] font-semibold tracking-[-0.2px]">99+</div>
      </div>
      <div className={`${slot} relative`}>
        <svg width="28" height="28" viewBox="0 0 28 28" className="shrink-0">
          <path d="M14 14 1.900 7A14 14 0 0 1 26.100 7z" fill="#e04a3a" /><path d="M14 14V7h12.100A14 14 0 0 1 14 28z" fill="#fbc934" /><path d="M14 14 20 17.500 14 28A14 14 0 0 1 1.900 7z" fill="#2ba24c" />
          <path d="M14 0A14 14 0 0 1 26.100 7H14z" fill="#e04a3a" /><circle cx="14" cy="14" r="6.500" fill="#fff" /><circle cx="14" cy="14" r="5.100" fill="#4587f3" />
        </svg>
        <div className="absolute bottom-0 left-[5px] h-[3px] w-[51px] bg-[#76b9ed]" />
      </div>
      <div className="relative ml-[1px] flex h-full w-[61px] items-center justify-center bg-[#515d62] pr-[3px]">
        <div className="flex h-[28px] w-[28px] items-center justify-center bg-[#f3f6f8]"><Logo size={26} colors={["#1f5f80", "#3d7f9f", "#3d7f9f", "#3d7f9f", "#3d7f9f"]} /></div>
        <div className="absolute bottom-0 left-0 h-[3px] w-[61px] bg-[#76b9ed]" />
      </div>
      <div className="ml-auto flex items-center pr-[6px]">
        <Svg w={17} h={10}><path d="m1 9 7.500-7.500L16 9" stroke="#fff" strokeWidth="1.500" /></Svg>
        <Svg w={17} h={17} className="ml-[14px]"><path d="M2 16C2 8 8 2 16 2M6 16c0-6 4-10 10-10M10 16c0-3.500 2.500-6 6-6" stroke="#dfe5e8" strokeWidth="1.300" /><circle cx="14.500" cy="14.500" r="2" fill="#fff" /></Svg>
        <Svg w={20} h={12} className="ml-[12px]"><path d="M1 1h16v10H1zM18.500 4v4" stroke="#fff" strokeWidth="1.500" /><path d="M3 3h9v6H3z" fill="#fff" /></Svg>
        <Svg w={19} h={16} className="ml-[9px]"><path d="M1 5.500h2.500L8 1.500v13l-4.500-4H1zM11 5l7 7M18 5l-7 7" stroke="#fff" strokeWidth="1.200" /></Svg>
        <span className="ml-[14px] w-[30px] text-[14.5px]">ENG</span>
        <div className="ml-[14px] flex w-[78px] flex-col items-center text-[14.5px] leading-[23px] tracking-[-0.25px] whitespace-nowrap"><span>12:27</span><span>15-07-2021</span></div>
        <div className="relative ml-[22px] h-[30px] w-[35px] pt-[5px]">
          <Svg w={20} h={22}><path d="M0 0h20v17h-8l-4 4v-4H0z" fill="#fff" /><path d="M4 5h12M4 8.500h12M4 12h12" stroke="#26343c" strokeWidth="1.200" /></Svg>
          <div className="absolute top-[14px] left-[7px] flex h-[22px] w-[25px] items-center justify-center rounded-full border border-[#98a2a7] bg-[#38454c] text-[14.5px] font-semibold tracking-[-0.2px]">32</div>
        </div>
        <div className="ml-[9px] h-[50px] w-px bg-[#55636b]" />
      </div>
    </div>
  );
}

export default function App() {
  return (
    <div className="flex h-[1080px] w-[1920px] flex-col overflow-hidden bg-white font-['Open_Sans',sans-serif]">
      <div className="flex h-[28px] shrink-0 items-center pl-[3px]">
        <div className="flex h-[18px] w-[18px] items-center justify-center border-r border-b border-[#c0c0c0] bg-[#f4f8fb]"><Logo size={16} colors={BLUE_LOGO} /></div>
        <span className="ml-[6px] pt-px text-[14.5px] tracking-[-0.17px] text-black">Tableau - FDI_Case_Study_Analysis</span>
        <div className="ml-auto flex items-center gap-[46px] pr-[25px]">
          <Svg w={12} h={12}><path d="M0 6.500h12" stroke="#111" strokeWidth="1" /></Svg>
          <Svg w={13} h={13}><path d="M.5 3h9.500v9.500H.5zM3 3V.5h9.500V10H10" stroke="#111" /></Svg>
          <Svg w={13} h={13}><path d="m.5.500 12 12M12.500.500l-12 12" stroke="#111" /></Svg>
        </div>
      </div>
      <div className="flex h-[26px] shrink-0 items-start pl-[8px] text-[14.500px] leading-[29px] tracking-[-0.2px] text-black">
        <span className="w-[39px]">File</span><span className="w-[48px]">Data</span><span className="w-[85px]">Worksheet</span>
        <span className="w-[89px]">Dashboard</span><span className="w-[50px]">Story</span><span className="w-[69px]">Analysis</span>
        <span className="w-[46px]">Map</span><span className="w-[63px]">Format</span><span className="w-[57px]">Server</span>
        <span className="w-[71px]">Window</span><span>Help</span>
      </div>
      <Toolbar />
      <div className="flex h-[862px] shrink-0">
        <SidePane />
        <div className="flex h-[862px] w-[1600px] shrink-0 bg-white">
          <div className="w-[1325px]">
            <div className="flex h-[326px]">
              <MinSheet />
              <DashV className="mt-[2px]" />
              <LowSheet />
            </div>
            <DashH className="ml-[8px]" />
            <div className="flex h-[534px]">
              <div className="w-[794px] shrink-0"><MaxSheet /><Chart /></div>
              <DashV />
              <GroupSheet />
            </div>
          </div>
          <FilterPane />
        </div>
        <div className="w-[38px] bg-[#f4f4f4]" />
        <VScroll className="h-[862px]" thumb="mt-[16px] h-[784px]" />
      </div>
      <SheetTabs />
      <StatusBar />
      <Taskbar />
    </div>
  );
}
